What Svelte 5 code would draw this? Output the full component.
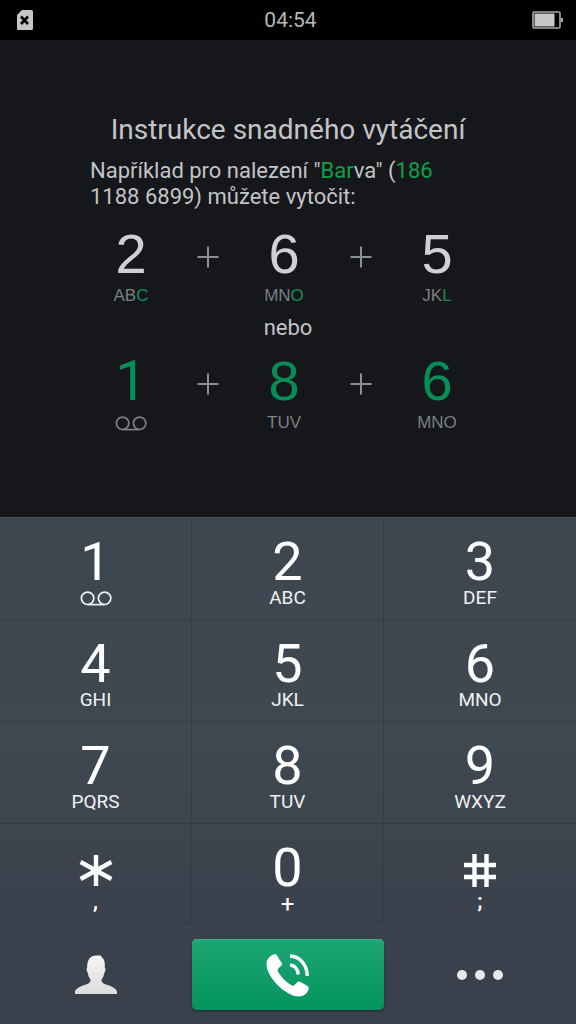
<script lang="ts">
  type Part = { text: string; hit?: boolean };
  type Step = { digit: string; parts: Part[] };

  const byName: Step[] = [
    { digit: '2', parts: [{ text: 'AB' }, { text: 'C', hit: true }] },
    { digit: '6', parts: [{ text: 'MN' }, { text: 'O', hit: true }] },
    { digit: '5', parts: [{ text: 'JK' }, { text: 'L', hit: true }] }
  ];

  const byNumber: Step[] = [
    { digit: '1', parts: [] },
    { digit: '8', parts: [{ text: 'TUV' }] },
    { digit: '6', parts: [{ text: 'MNO' }] }
  ];

  const keys = [
    { digit: '1', letters: '' },
    { digit: '2', letters: 'ABC' },
    { digit: '3', letters: 'DEF' },
    { digit: '4', letters: 'GHI' },
    { digit: '5', letters: 'JKL' },
    { digit: '6', letters: 'MNO' },
    { digit: '7', letters: 'PQRS' },
    { digit: '8', letters: 'TUV' },
    { digit: '9', letters: 'WXYZ' },
    { digit: '*', letters: ',' },
    { digit: '0', letters: '+' },
    { digit: '#', letters: ';' }
  ];
</script>

{#snippet voicemail()}
  <svg class="voicemail" viewBox="0 0 32 15" width="32" height="15" fill="none" stroke="currentColor" stroke-width="1.7">
    <circle cx="7.6" cy="7.3" r="6.2" />
    <circle cx="24.6" cy="7.3" r="6.2" />
    <path d="M7.500 13.600H24.700" />
  </svg>
{/snippet}

{#snippet steps(list: Step[])}
  {#each list as step, i}
    {#if i > 0}
      <svg class="plus" viewBox="0 0 22 22" width="22" height="22" fill="none" stroke="currentColor" stroke-width="2"><path d="M11 0.5V21.5M0.5 11H21.5" /></svg>
    {/if}
    <div class="step">
      <span class="step-digit" class:one={step.digit === '1'}>{step.digit}</span>
      <span class="step-letters">
        {#each step.parts as part}<span class:hit={part.hit}>{part.text}</span>{:else}{@render voicemail()}{/each}
      </span>
    </div>
  {/each}
{/snippet}

<div class="dialer">
  <header class="status">
    <svg class="sim" viewBox="0 0 16 20" width="16" height="20">
      <path d="M5 0H14.5Q16 0 16 1.5V18.5Q16 20 14.5 20H1.5Q0 20 0 18.5V5Z" fill="#c6c6c6" />
      <path d="M4 6.5L11 14M11 6.5L4 14" stroke="#000" stroke-width="2.6" />
    </svg>
    <time>04:54</time>
    <svg class="battery" viewBox="0 0 32 18" width="32" height="18">
      <rect x="1" y="1" width="27" height="16" rx="1.5" fill="none" stroke="#aaa" stroke-width="1.6" />
      <rect x="2.5" y="2.5" width="20" height="13" fill="#c8c8c8" />
      <rect x="29" y="7" width="2" height="4" fill="#aaa" />
    </svg>
  </header>

  <main class="guide">
    <h1>Instrukce snadného vytáčení</h1>
    <p class="example">Například pro nalezení "<em>Bar</em>va" (<em>186</em> 1188 6899) můžete vytočit:</p>
    <div class="steps">{@render steps(byName)}</div>
    <p class="or">nebo</p>
    <div class="steps by-number">{@render steps(byNumber)}</div>
  </main>

  <div class="pad">
    <div class="keys">
      {#each keys as key}
        <button class="key" type="button" aria-label={key.digit}>
          <span class="digit">
            {#if key.digit === '*'}
              <svg viewBox="0 0 34 40" width="34" height="40" fill="none" stroke="currentColor" stroke-width="4.4"><path d="M17 7V38M1.6 14L32.4 31M1.6 31L32.4 14" /></svg>
            {:else if key.digit === '#'}
              <svg viewBox="0 0 34 40" width="34" height="40" fill="none" stroke="currentColor" stroke-width="4.4"><path d="M11.500 6V39M23.500 6V39M1 17H33M1 29H33" /></svg>
            {:else}
              {key.digit}
            {/if}
          </span>
          <span class="letters" class:symbol={key.letters.length === 1} class:mark={key.letters === ',' || key.letters === ';'}>
            {#if key.letters}{key.letters}{:else}{@render voicemail()}{/if}
          </span>
        </button>
      {/each}
    </div>

    <footer class="actions">
      <button type="button" aria-label="Kontakty">
        <svg viewBox="0 0 42 40" width="42" height="40">
          <defs>
            <linearGradient id="silver" x1="0" y1="0" x2="0" y2="1">
              <stop offset="0" stop-color="#f5f5f5" />
              <stop offset="1" stop-color="#dcdcdc" />
            </linearGradient>
          </defs>
          <path d="M0 39V37C0 34 5 31.500 9.500 30C14 28.500 15.500 27.500 15.500 24.500C13.800 22.500 13 20 12.700 17.500C11.300 16.500 11.300 13.500 12.200 12.500C12 4.500 15.500 0.500 21 0.500L26 0.500L26.500 2C29 3.500 30.200 7 29.800 12.500C30.800 13.500 30.700 16.500 29.400 17.500C29 20 28.300 22.500 26.500 24.500C26.500 27.500 28 28.500 32.500 30C37 31.500 42 34 42 37V39Z" fill="url(#silver)" />
        </svg>
      </button>
      <button class="call" type="button" aria-label="Zavolat">
        <svg viewBox="0 0 44 44" width="44" height="44">
          <path d="M7.500 1.500C3.500 3 0.500 6.500 0.500 11.500C0.500 24 20 43.500 32.500 43.500C38 43.500 41.500 40.500 42.700 36C43 34.800 42.500 33.800 41.500 33L34.500 29C33.300 28.300 32.300 28.300 31.500 29L28.500 32C27.500 33 26.300 32.800 25 32C19.500 28.500 15.500 24.500 12.200 19C11.500 17.500 11.500 16.500 12.300 15.500L15.500 12.500C16.200 11.700 16.200 11 15.700 10L11 2.500C10.200 1.200 9 1 7.500 1.500Z" fill="#fff" />
          <path d="M24 3C34 3.500 41 11.500 41.300 23M24 12C29 12.500 31.800 16 32.300 21.500" fill="none" stroke="#fff" stroke-width="3.400" />
        </svg>
      </button>
      <button type="button" aria-label="Další možnosti">
        <svg viewBox="0 0 46 10" width="46" height="10" fill="#e9e9e9"><circle cx="5" cy="5" r="5" /><circle cx="23" cy="5" r="5" /><circle cx="41" cy="5" r="5" /></svg>
      </button>
    </footer>
  </div>
</div>

<style>
  :global(body) { background: #16171b; }
  .dialer { min-height: 100vh; display: flex; flex-direction: column; background: #16171b; color: #c3c4c6; font-family: Roboto, "Noto Sans", sans-serif; }
  svg { display: block; }
  button { appearance: none; border: 0; margin: 0; padding: 0; background: none; color: #fff; font: inherit; cursor: pointer; }

  .status { display: grid; grid-template-columns: 1fr auto 1fr; align-items: center; height: 40px; padding: 0 12px 0 17px; background: #000; color: #b8b8b8; font-size: 21px; }
  .battery { justify-self: end; }

  .guide { flex: 1; padding: 72px 90px 0; }
  h1 { margin: 0; font-size: 28px; font-weight: 400; line-height: 36px; text-align: center; white-space: nowrap; }
  .example { margin: 10px 0 0; font-size: 22px; line-height: 26px; }
  .example em { color: #0ea047; font-style: normal; }
  .steps { display: grid; grid-template-columns: 82px 1fr 82px 1fr 82px; justify-items: center; margin-top: 18px; padding-right: 8px; font-family: "Liberation Sans", sans-serif; }
  .plus { margin-top: 18px; color: #8c8f93; }
  .step { display: flex; flex-direction: column; align-items: center; }
  .step-digit { font-size: 56px; line-height: 52px; color: #d0d1d4; }
  .step-digit.one { font-family: Roboto, sans-serif; }
  .step-letters { display: flex; align-items: center; height: 22px; margin-top: 5px; font-size: 17px; color: #7c7f83; }
  .hit { color: #109360; }
  .by-number { margin-top: 14px; }
  .by-number .step-digit { color: #078d57; }
  .or { margin: 8px 0 0; font-size: 22px; line-height: 26px; text-align: center; }

  .pad { background: linear-gradient(#3e474f, #3e4850 45%, #3c424d 75%, #3a404b); border-top: 1px solid #46525a; }
  .keys { display: grid; grid-template-columns: repeat(3, 1fr); }
  .key { display: flex; flex-direction: column; align-items: center; justify-content: flex-start; height: 102px; padding-top: 17px; border-bottom: 1px solid #353c45; border-right: 1px solid #353c45; }
  .key:nth-child(3n) { border-right: 0; }
  .digit { display: flex; align-items: center; justify-content: center; height: 54px; font-size: 54px; line-height: 54px; }
  .letters { display: flex; align-items: center; height: 18px; font-size: 19px; line-height: 18px; color: #f0f1f2; }
  .symbol { font-size: 24px; color: #fff; }
  .mark { font-weight: 700; font-size: 20px; line-height: 12px; align-items: flex-start; }

  .actions { display: grid; grid-template-columns: repeat(3, 1fr); height: 98px; padding: 12px 0 14px; box-sizing: border-box; border-top: 1px solid #424c56; }
  .actions button { display: flex; align-items: center; justify-content: center; }
  .actions .call { border-radius: 5px; background: linear-gradient(#1ea675, #03935f); box-shadow: 0 1px 2px #20272f, inset 0 1px #39b285; }
</style>
